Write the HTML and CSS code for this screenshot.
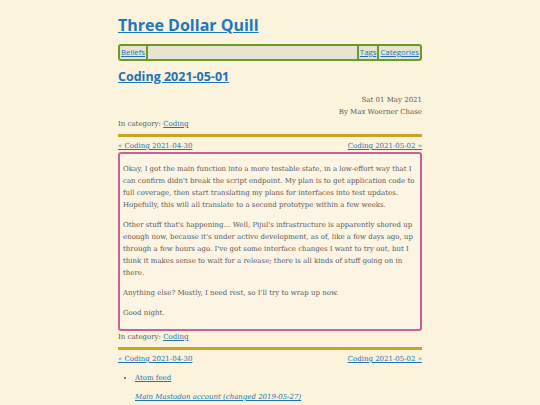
FILE: index.html
```html
<!DOCTYPE html>
<html lang="en">
<head>
<meta charset="utf-8">
<title>Coding 2021-05-01 - Three Dollar Quill</title>
<link rel="stylesheet" href="styles.css">
</head>
<body>
<div class="page">
  <header class="site-header">
    <h1 class="site-title"><a href="#">Three Dollar Quill</a></h1>
    <nav class="topnav">
      <a class="nav-item" href="#">Beliefs</a>
      <span class="nav-spacer"></span>
      <a class="nav-item" href="#">Tags</a>
      <a class="nav-item" href="#">Categories</a>
    </nav>
  </header>
  <article class="post">
    <h2 class="post-title"><a href="#">Coding 2021-05-01</a></h2>
    <div class="meta">
      <div>Sat 01 May 2021</div>
      <div>By Max Woerner Chase</div>
    </div>
    <div class="category">In category: <a href="#">Coding</a></div>
    <div class="rule"></div>
    <div class="pager"><a href="#">« Coding 2021-04-30</a><a href="#">Coding 2021-05-02 »</a></div>
    <div class="content">
      <p>Okay, I got the main function into a more testable state, in a low-effort way that I can confirm didn't break the script endpoint. My plan is to get application code to full coverage, then start translating my plans for interfaces into test updates. Hopefully, this will all translate to a second prototype within a few weeks.</p>
      <p>Other stuff that's happening… Well, Pijul's infrastructure is apparently shored up enough now, because it's under active development, as of, like a few days ago, up through a few hours ago. I've got some interface changes I want to try out, but I think it makes sense to wait for a release; there is all kinds of stuff going on in there.</p>
      <p>Anything else? Mostly, I need rest, so I'll try to wrap up now.</p>
      <p>Good night.</p>
    </div>
    <div class="category">In category: <a href="#">Coding</a></div>
    <div class="rule"></div>
    <div class="pager"><a href="#">« Coding 2021-04-30</a><a href="#">Coding 2021-05-02 »</a></div>
  </article>
  <footer class="site-footer">
    <ul class="feeds"><li><a href="#">Atom feed</a></li></ul>
    <p class="social"><a href="#"><em>Main Mastodon account (changed 2019-05-27)</em></a></p>
  </footer>
</div>
</body>
</html>
```
FILE: styles.css
```css
html, body {
  margin: 0;
  padding: 0;
  background: #fbf3dc;
}
body {
  font-family: "DejaVu Serif", serif;
  font-size: 7px;
  line-height: 12px;
  color: #595855;
}
a {
  color: #2173b6;
}
.page {
  width: 304px;
  margin: 0 auto;
  padding-top: 14px;
}
.site-title {
  margin: 0;
  font-family: "Open Sans", sans-serif;
  font-size: 16px;
  line-height: 22px;
  font-weight: 700;
}
.site-title a {
  color: #1c78c0;
}
.topnav {
  margin-top: 8px;
  display: flex;
  align-items: stretch;
  border: 2px solid #6b9a2a;
  border-radius: 3px;
  background: #e9e4d1;
  font-family: "Open Sans", sans-serif;
  font-size: 7.8px;
  line-height: 13px;
  height: 13px;
}
.nav-item {
  padding: 0 1px;
}
.nav-item:first-child {
  border-right: 2px solid #6b9a2a;
}
.nav-spacer {
  flex: 1;
  border-right: 2px solid #6b9a2a;
}
.nav-item + .nav-item {
  border-left: 2px solid #6b9a2a;
}
.post-title {
  margin: 7px 0 0;
  font-family: "Open Sans", sans-serif;
  font-size: 12.5px;
  line-height: 18px;
  font-weight: 700;
}
.meta {
  margin-top: 8px;
  text-align: right;
}
.rule {
  height: 3px;
  background: #c9a228;
  margin: 4px 0 3px;
}
.pager {
  display: flex;
  justify-content: space-between;
}
.content {
  border: 2px solid #c8609c;
  border-radius: 3px;
  background: #fdf5e4;
  padding: 1px 3px 2px;
}
.content p {
  margin: 8px 0;
}
.site-footer {
  margin-top: 3px;
}
.feeds {
  margin: 0;
  padding-left: 17px;
}
.feeds li {
  line-height: 20px;
}
.social {
  margin: 0;
  padding-left: 17px;
  line-height: 18px;
}
```
